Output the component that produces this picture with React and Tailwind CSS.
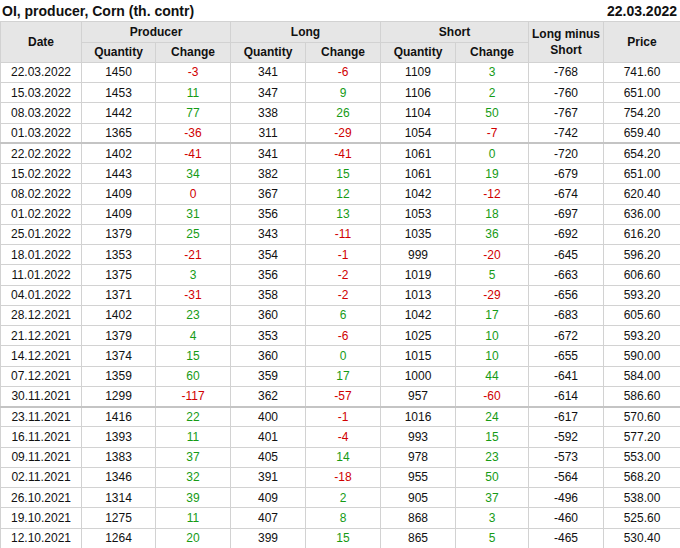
import React from 'react';

const rows = [
  ['22.03.2022', 1450, -3, 341, -6, 1109, 3, -768, '741.60'],
  ['15.03.2022', 1453, 11, 347, 9, 1106, 2, -760, '651.00'],
  ['08.03.2022', 1442, 77, 338, 26, 1104, 50, -767, '754.20'],
  ['01.03.2022', 1365, -36, 311, -29, 1054, -7, -742, '659.40'],
  ['22.02.2022', 1402, -41, 341, -41, 1061, 0, -720, '654.20', true],
  ['15.02.2022', 1443, 34, 382, 15, 1061, 19, -679, '651.00'],
  ['08.02.2022', 1409, 'z', 367, 12, 1042, -12, -674, '620.40'],
  ['01.02.2022', 1409, 31, 356, 13, 1053, 18, -697, '636.00'],
  ['25.01.2022', 1379, 25, 343, -11, 1035, 36, -692, '616.20'],
  ['18.01.2022', 1353, -21, 354, -1, 999, -20, -645, '596.20'],
  ['11.01.2022', 1375, 3, 356, -2, 1019, 5, -663, '606.60'],
  ['04.01.2022', 1371, -31, 358, -2, 1013, -29, -656, '593.20'],
  ['28.12.2021', 1402, 23, 360, 6, 1042, 17, -683, '605.60'],
  ['21.12.2021', 1379, 4, 353, -6, 1025, 10, -672, '593.20'],
  ['14.12.2021', 1374, 15, 360, 0, 1015, 10, -655, '590.00'],
  ['07.12.2021', 1359, 60, 359, 17, 1000, 44, -641, '584.00'],
  ['30.11.2021', 1299, -117, 362, -57, 957, -60, -614, '586.60'],
  ['23.11.2021', 1416, 22, 400, -1, 1016, 24, -617, '570.60', true],
  ['16.11.2021', 1393, 11, 401, -4, 993, 15, -592, '577.20'],
  ['09.11.2021', 1383, 37, 405, 14, 978, 23, -573, '553.00'],
  ['02.11.2021', 1346, 32, 391, -18, 955, 50, -564, '568.20'],
  ['26.10.2021', 1314, 39, 409, 2, 905, 37, -496, '538.00'],
  ['19.10.2021', 1275, 11, 407, 8, 868, 3, -460, '525.60'],
  ['12.10.2021', 1264, 20, 399, 15, 865, 5, -465, '530.40'],
];

// 'z' = a zero that the source paints red
const Change = ({ v }) => {
  const red = v === 'z' || v < 0;
  return (
    <span className={red ? 'text-[#d00000]' : 'text-[#169b16]'}>
      {v === 'z' ? 0 : v}
    </span>
  );
};

const th = 'border border-[#d2d2d2] bg-[#e6e6e6] font-bold text-center p-0';

export default function App() {
  return (
    <div className="w-[680px] h-[548px] bg-white text-[#111] overflow-hidden" style={{ fontFamily: '"Liberation Sans", Arial, sans-serif' }}>
      <div className="flex justify-between items-center h-[21px] px-[2px] pr-[3px] text-[14px] font-bold leading-none">
        <span>OI, producer, Corn (th. contr)</span>
        <span>22.03.2022</span>
      </div>
      <table className="w-[680px] table-fixed border-collapse text-[12px] leading-none">
        <colgroup>
          <col className="w-[81px]" />
          <col className="w-[74px]" />
          <col className="w-[75px]" />
          <col className="w-[75px]" />
          <col className="w-[75px]" />
          <col className="w-[75px]" />
          <col className="w-[73px]" />
          <col className="w-[75px]" />
          <col className="w-[77px]" />
        </colgroup>
        <thead>
          <tr className="h-[20.5px]">
            <th rowSpan={2} className={th}>Date</th>
            <th colSpan={2} className={th}>Producer</th>
            <th colSpan={2} className={th}>Long</th>
            <th colSpan={2} className={th}>Short</th>
            <th rowSpan={2} className={`${th} leading-[16px]`}>Long minus<br />Short</th>
            <th rowSpan={2} className={th}>Price</th>
          </tr>
          <tr className="h-[20.25px]">
            <th className={th}>Quantity</th>
            <th className={th}>Change</th>
            <th className={th}>Quantity</th>
            <th className={th}>Change</th>
            <th className={th}>Quantity</th>
            <th className={th}>Change</th>
          </tr>
        </thead>
        <tbody>
          {rows.map((r) => {
            const td = `border border-[#d2d2d2] text-center p-0 ${r[9] ? 'border-t-2 border-t-[#c4c4c4]' : ''}`;
            return (
              <tr key={r[0]} className="h-[20.25px]">
                <td className={td}>{r[0]}</td>
                <td className={td}>{r[1]}</td>
                <td className={td}><Change v={r[2]} /></td>
                <td className={td}>{r[3]}</td>
                <td className={td}><Change v={r[4]} /></td>
                <td className={td}>{r[5]}</td>
                <td className={td}><Change v={r[6]} /></td>
                <td className={td}>{r[7]}</td>
                <td className={td}>{r[8]}</td>
              </tr>
            );
          })}
        </tbody>
      </table>
    </div>
  );
}
